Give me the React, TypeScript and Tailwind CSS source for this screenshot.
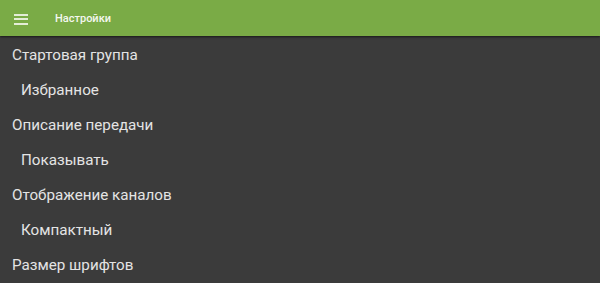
import React from 'react'

const items = [
    {title: 'Стартовая группа', value: 'Избранное'},
    {title: 'Описание передачи', value: 'Показывать'},
    {title: 'Отображение каналов', value: 'Компактный'},
    {title: 'Размер шрифтов', value: null},
]

export default function App() {
    return (
        <div className="w-[600px] h-[283px] overflow-hidden bg-[#3b3b3b] text-[#e4e4e4]"
             style={{fontFamily: 'Roboto, "Noto Sans", sans-serif'}}>
            <div className="h-[36px] bg-[#7aab46] flex items-center shadow-[0_1px_2px_rgba(0,0,0,0.6)] relative">
                <div className="ml-[14px] mt-[2px] w-[14px] flex flex-col gap-[2.5px]">
                    <span className="h-[2px] bg-[#e3edd6]"/>
                    <span className="h-[2px] bg-[#e3edd6]"/>
                    <span className="h-[2px] bg-[#e3edd6]"/>
                </div>
                <span className="ml-[27px] mt-[3px] text-[11px] font-medium text-[#f4f7ef]">Настройки</span>
            </div>
            <div className="pt-[2px]">
                {items.map(it => (
                    <div key={it.title}>
                        <div className="h-[35px] flex items-center pl-[12px] text-[15.2px]">{it.title}</div>
                        {it.value && (
                            <div className="h-[35px] flex items-center pl-[21px] text-[15.2px]">{it.value}</div>
                        )}
                    </div>
                ))}
            </div>
        </div>
    )
}
